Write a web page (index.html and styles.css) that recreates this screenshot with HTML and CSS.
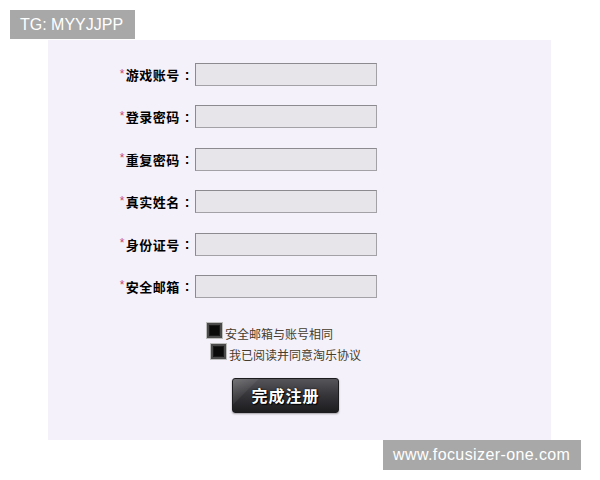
FILE: index.html
```html
<!DOCTYPE html>
<html lang="zh-CN">
<head>
<meta charset="utf-8">
<title>注册</title>
<link rel="stylesheet" href="styles.css">
</head>
<body>
<div class="tag tag-top">TG: MYYJJPP</div>
<div class="panel">
  <div class="form">
    <label class="lbl"><span class="req">*</span>游戏账号<span class="colon">:</span></label><span class="inp"></span>
    <label class="lbl"><span class="req">*</span>登录密码<span class="colon">:</span></label><span class="inp"></span>
    <label class="lbl"><span class="req">*</span>重复密码<span class="colon">:</span></label><span class="inp"></span>
    <label class="lbl"><span class="req">*</span>真实姓名<span class="colon">:</span></label><span class="inp"></span>
    <label class="lbl"><span class="req">*</span>身份证号<span class="colon">:</span></label><span class="inp"></span>
    <label class="lbl"><span class="req">*</span>安全邮箱<span class="colon">:</span></label><span class="inp"></span>
  </div>
  <div class="check check-1"><span class="box"></span><span class="ctext">安全邮箱与账号相同</span></div>
  <div class="check check-2"><span class="box"></span><span class="ctext">我已阅读并同意淘乐协议</span></div>
  <div class="btn">完成注册</div>
</div>
<div class="tag tag-bottom">www.focusizer-one.com</div>
</body>
</html>
```
FILE: styles.css
```css
html, body {
  margin: 0;
  padding: 0;
  background: #ffffff;
}
body {
  width: 600px;
  height: 480px;
  position: relative;
  overflow: hidden;
  font-family: "Noto Sans CJK SC", "Liberation Sans", sans-serif;
}
.tag {
  position: absolute;
  background: #a8a8a8;
  color: #ffffff;
  font-family: "Liberation Sans", Arial, sans-serif;
  font-size: 16px;
  height: 30px;
  line-height: 30px;
  padding: 0 10px;
  box-sizing: border-box;
}
.tag-top {
  left: 10px;
  top: 10px;
  width: 125px;
  height: 29px;
  line-height: 29px;
}
.tag-bottom {
  left: 383px;
  top: 440px;
  width: 198px;
  letter-spacing: 0.4px;
}
.panel {
  margin: 40px 0 0 48px;
  width: 503px;
  height: 400px;
  background: #f5f1fa;
  padding-top: 23px;
  box-sizing: border-box;
}
.form {
  display: grid;
  grid-template-columns: 73px 182px;
  column-gap: 4px;
  row-gap: 19.4px;
  padding-left: 70px;
}
.lbl {
  height: 23px;
  display: flex;
  align-items: center;
  justify-content: flex-end;
  font-size: 13px;
  font-weight: 700;
  letter-spacing: 0.5px;
  color: #000000;
  white-space: nowrap;
}
.req {
  color: #c8476a;
  font-weight: 400;
  font-family: "Liberation Sans", sans-serif;
  font-size: 12px;
  margin-right: 1px;
  position: relative;
  top: -1px;
}
.colon {
  font-family: "Liberation Sans", sans-serif;
  font-weight: 700;
  font-size: 14px;
  margin-left: 5px;
  margin-right: 1px;
}
.inp {
  height: 23px;
  box-sizing: border-box;
  background: #e7e5e9;
  border: 1px solid #8c8a8e;
  border-right-color: #a3a1a5;
  border-bottom-color: #a3a1a5;
}
.check {
  display: flex;
  align-items: flex-end;
  height: 15px;
}
.check-1 {
  margin-top: 25px;
  padding-left: 159px;
}
.check-2 {
  margin-top: 6px;
  padding-left: 163px;
}
.box {
  width: 15px;
  height: 15px;
  box-sizing: border-box;
  background: #0a0a0a;
  border: 2px solid #4a4a4a;
  box-shadow: inset 0 0 0 1px #1a1a1a, 0 0 0 1px #bdbdbd;
  flex: none;
}
.ctext {
  font-size: 12px;
  line-height: 12px;
  color: #463c2c;
  margin-left: 3px;
  position: relative;
  top: 2px;
  white-space: nowrap;
}
.btn {
  margin: 19px 0 0 184px;
  width: 107px;
  height: 35px;
  box-sizing: border-box;
  border: 1px solid #1c1c1e;
  border-radius: 3px;
  background:
    linear-gradient(135deg, rgba(255,255,255,0.18) 0%, rgba(255,255,255,0.06) 18%, rgba(255,255,255,0) 19%),
    linear-gradient(#56565a 0%, #38383c 45%, #1c1c1f 100%);
  box-shadow: 0 1px 2px rgba(0,0,0,0.35);
  color: #ffffff;
  font-size: 16px;
  font-weight: 700;
  letter-spacing: 1px;
  text-shadow: 1px 1px 1px #000000, 0 0 2px #000000;
  display: flex;
  align-items: center;
  justify-content: center;
}
```
